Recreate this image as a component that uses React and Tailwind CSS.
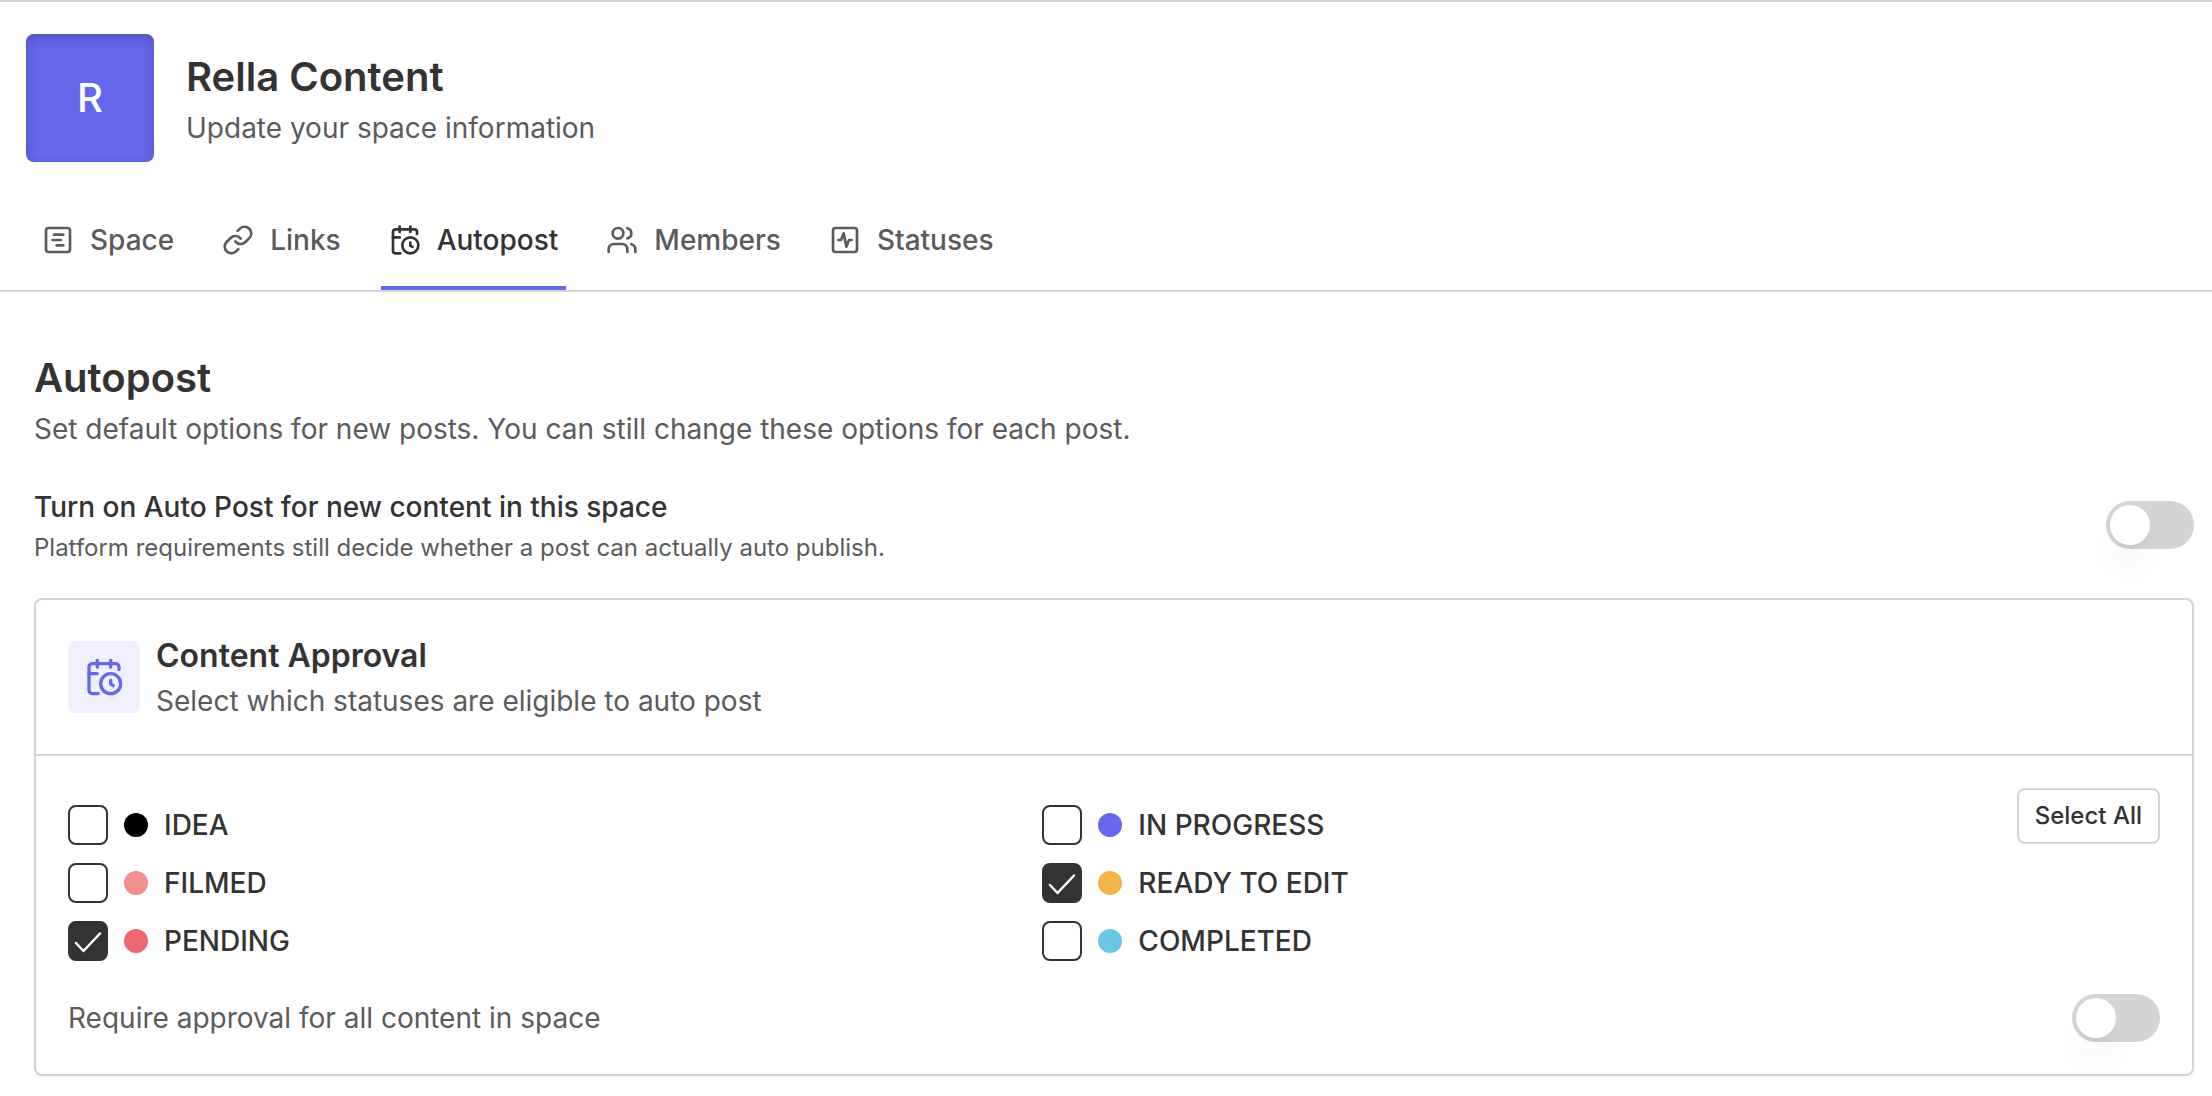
import { useState } from "react";
import { CalendarClock, Link, SquareActivity, SquareChartGantt, Users } from "lucide-react";

const tabs = [
  { name: "Space", icon: SquareChartGantt },
  { name: "Links", icon: Link },
  { name: "Autopost", icon: CalendarClock },
  { name: "Members", icon: Users },
  { name: "Statuses", icon: SquareActivity },
];

const statuses = [
  { id: "idea", label: "IDEA", dot: "bg-black" },
  { id: "in-progress", label: "IN PROGRESS", dot: "bg-[#6868ee]" },
  { id: "filmed", label: "FILMED", dot: "bg-[#f09090]" },
  { id: "ready", label: "READY TO EDIT", dot: "bg-[#f2b648]" },
  { id: "pending", label: "PENDING", dot: "bg-[#ee6671]" },
  { id: "completed", label: "COMPLETED", dot: "bg-[#69c6e6]" },
];

function Toggle({ id, checked, onChange }) {
  return (
    <span className="relative inline-flex h-12 w-[88px] shrink-0">
      <input
        id={id}
        type="checkbox"
        role="switch"
        checked={checked}
        onChange={(e) => onChange(e.target.checked)}
        className="peer h-full w-full cursor-pointer appearance-none rounded-full bg-[#d4d4d4] checked:bg-[#6568eb]"
      />
      <span className="pointer-events-none absolute left-1 top-1 size-10 rounded-full bg-white shadow-[0_24px_32px_-8px_rgba(0,0,0,0.08),0_8px_12px_-4px_rgba(0,0,0,0.03)] peer-checked:translate-x-10" />
    </span>
  );
}

function StatusOption({ status, checked, onToggle }) {
  return (
    <label htmlFor={status.id} className="flex h-[42px] cursor-pointer items-center gap-4">
      <span className="relative flex size-10 shrink-0">
        <input
          id={status.id}
          type="checkbox"
          checked={checked}
          onChange={onToggle}
          className="peer size-10 cursor-pointer appearance-none rounded-lg border-2 border-[#333333] bg-white checked:bg-[#333333]"
        />
        <svg
          viewBox="0 0 40 40"
          fill="none"
          stroke="white"
          strokeWidth="2.5"
          strokeLinecap="round"
          strokeLinejoin="round"
          className="pointer-events-none absolute inset-0 hidden size-10 peer-checked:block"
        >
          <path d="M8 22 L15.5 30 L32 12.5" />
        </svg>
      </span>
      <span className={`size-6 shrink-0 rounded-full ${status.dot}`} />
      <span className="text-[28px] font-medium">{status.label}</span>
    </label>
  );
}

export default function App() {
  const [activeTab, setActiveTab] = useState("Autopost");
  const [autoPost, setAutoPost] = useState(false);
  const [approval, setApproval] = useState(false);
  const [selected, setSelected] = useState(["ready", "pending"]);

  const toggleStatus = (id) => {
    setSelected((prev) => (prev.includes(id) ? prev.filter((s) => s !== id) : [...prev, id]));
  };

  return (
    <div className="min-h-screen border-t-2 border-[#d4d4d4] bg-white font-[Inter,sans-serif] text-[#333333]">
      <header className="flex items-center gap-8 px-[26px] pt-8">
        <div className="flex size-32 shrink-0 items-center justify-center rounded-lg bg-[#6568eb] text-[40px] font-medium text-white shadow-[inset_0_4px_12px_rgba(0,0,0,0.2),0_2px_4px_rgba(0,0,0,0.05)]">
          R
        </div>
        <div className="pt-1">
          <h1 className="text-[40px] leading-[56px] font-semibold">Rella Content</h1>
          <p className="text-[28px] leading-[46px] text-[#5b5b5b]">Update your space information</p>
        </div>
      </header>

      <nav className="mt-7 flex gap-8 border-b-2 border-[#d4d4d4] px-[34px]">
        {tabs.map(({ name, icon: Icon }) => (
          <button
            key={name}
            type="button"
            onClick={() => setActiveTab(name)}
            className={`flex h-[100px] items-center gap-4 border-b-4 px-2 pt-1 text-[28px] font-medium ${
              name === activeTab ? "border-[#6568eb]" : "border-transparent text-[#5b5b5b]"
            }`}
          >
            <Icon className="size-8" />
            {name}
          </button>
        ))}
      </nav>

      <main className="pt-[58px] pr-[18px] pb-5 pl-[34px]">
        <h2 className="text-[40px] leading-[56px] font-semibold">Autopost</h2>
        <p className="text-[28px] leading-[46px] text-[#5b5b5b]">
          Set default options for new posts. You can still change these options for each post.
        </p>

        <div className="mt-8 flex items-center justify-between gap-8">
          <div>
            <label htmlFor="auto-post" className="block text-[28px] leading-[46px] font-medium">
              Turn on Auto Post for new content in this space
            </label>
            <p className="text-2xl leading-9 text-[#5b5b5b]">
              Platform requirements still decide whether a post can actually auto publish.
            </p>
          </div>
          <Toggle id="auto-post" checked={autoPost} onChange={setAutoPost} />
        </div>

        <section className="mt-8 rounded-lg border-2 border-[#d4d4d4] shadow-[0_2px_4px_rgba(0,0,0,0.05)]">
          <div className="flex items-center gap-4 border-b-2 border-[#d4d4d4] p-8">
            <div className="flex size-[72px] shrink-0 items-center justify-center rounded-lg bg-[#f0effd] text-[#6568eb]">
              <CalendarClock className="size-10" />
            </div>
            <div>
              <h3 className="text-[32px] leading-[48px] font-semibold">Content Approval</h3>
              <p className="text-[28px] leading-[42px] text-[#5b5b5b]">Select which statuses are eligible to auto post</p>
            </div>
          </div>

          <div className="p-8">
            <div className="flex items-start">
              <div className="grid flex-1 grid-cols-2 gap-y-4 pt-4">
                {statuses.map((status) => (
                  <StatusOption
                    key={status.id}
                    status={status}
                    checked={selected.includes(status.id)}
                    onToggle={() => toggleStatus(status.id)}
                  />
                ))}
              </div>
              <button
                type="button"
                onClick={() => setSelected(statuses.map((s) => s.id))}
                className="h-14 rounded-lg border-2 border-[#d4d4d4] px-4 text-2xl font-medium"
              >
                Select All
              </button>
            </div>

            <div className="mt-8 flex items-center justify-between gap-8">
              <label htmlFor="require-approval" className="text-[28px] leading-[42px] text-[#5b5b5b]">
                Require approval for all content in space
              </label>
              <Toggle id="require-approval" checked={approval} onChange={setApproval} />
            </div>
          </div>
        </section>
      </main>
    </div>
  );
}
